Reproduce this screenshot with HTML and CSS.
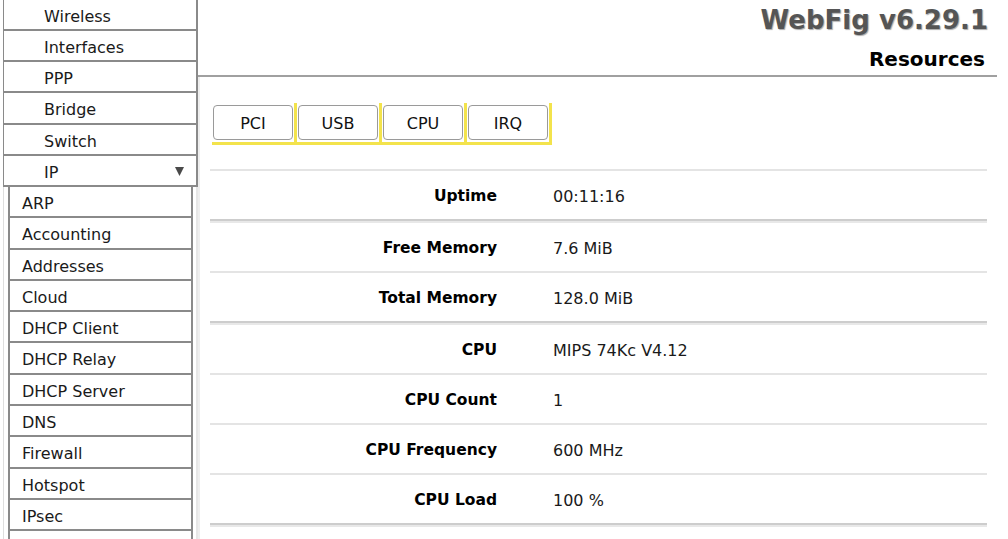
FILE: index.html
```html
<!DOCTYPE html>
<html lang="en">
<head>
<meta charset="utf-8">
<title>WebFig - Resources</title>
<link rel="stylesheet" href="styles.css">
</head>
<body>
<div class="page">
  <nav class="sidebar">
    <ul class="menu">
      <li class="menu-item first">Wireless</li>
      <li class="menu-item">Interfaces</li>
      <li class="menu-item">PPP</li>
      <li class="menu-item">Bridge</li>
      <li class="menu-item">Switch</li>
      <li class="menu-item open">IP
        <svg class="arrow" width="9" height="10" viewBox="0 0 9 10"><polygon points="0,1 9,1 4.5,10" fill="#4a4a4a"/></svg>
      </li>
    </ul>
    <div class="submenu-wrap">
      <ul class="submenu">
        <li class="sub-item">ARP</li>
        <li class="sub-item">Accounting</li>
        <li class="sub-item">Addresses</li>
        <li class="sub-item">Cloud</li>
        <li class="sub-item">DHCP Client</li>
        <li class="sub-item">DHCP Relay</li>
        <li class="sub-item">DHCP Server</li>
        <li class="sub-item">DNS</li>
        <li class="sub-item">Firewall</li>
        <li class="sub-item">Hotspot</li>
        <li class="sub-item">IPsec</li>
        <li class="sub-item empty"></li>
      </ul>
    </div>
  </nav>
  <main class="main">
    <header class="header">
      <div class="brand">WebFig v6.29.1</div>
      <div class="page-title">Resources</div>
    </header>
    <section class="content">
      <div class="tabs">
        <span class="tab"><button class="tab-btn">PCI</button></span>
        <span class="tab"><button class="tab-btn">USB</button></span>
        <span class="tab"><button class="tab-btn">CPU</button></span>
        <span class="tab"><button class="tab-btn">IRQ</button></span>
      </div>
      <div class="table">
        <div class="sep single"></div>
        <div class="row"><span class="label">Uptime</span><span class="value">00:11:16</span></div>
        <div class="sep double"></div>
        <div class="row"><span class="label">Free Memory</span><span class="value">7.6 MiB</span></div>
        <div class="sep single"></div>
        <div class="row"><span class="label">Total Memory</span><span class="value">128.0 MiB</span></div>
        <div class="sep double"></div>
        <div class="row"><span class="label">CPU</span><span class="value">MIPS 74Kc V4.12</span></div>
        <div class="sep single"></div>
        <div class="row"><span class="label">CPU Count</span><span class="value">1</span></div>
        <div class="sep single"></div>
        <div class="row"><span class="label">CPU Frequency</span><span class="value">600 MHz</span></div>
        <div class="sep single"></div>
        <div class="row"><span class="label">CPU Load</span><span class="value">100 %</span></div>
        <div class="sep double"></div>
      </div>
    </section>
  </main>
</div>
</body>
</html>
```

FILE: styles.css
```css
html, body {
  margin: 0;
  padding: 0;
  height: 539px;
  overflow: hidden;
  background: #fff;
}

body {
  font-family: "DejaVu Sans", Verdana, sans-serif;
  font-size: 16px;
  color: #1a1a1a;
}

.page {
  display: flex;
  align-items: stretch;
  height: 539px;
}

/* ---------- sidebar ---------- */
.sidebar {
  width: 198px;
  flex: none;
  display: flex;
  flex-direction: column;
}

.menu, .submenu {
  list-style: none;
  margin: 0;
  padding: 0;
}

.menu {
  margin-left: 3px;
}

.menu-item {
  position: relative;
  height: 29.2px;
  line-height: 33px;
  padding-left: 40px;
  border-left: 1px solid #8a8a8a;
  border-right: 2px solid #8a8a8a;
  border-bottom: 2px solid #8a8a8a;
  color: #1a1a1a;
}

.menu-item.first {
  height: 29px;
  line-height: 34px;
}

.arrow {
  position: absolute;
  right: 12px;
  top: 10px;
}

.submenu-wrap {
  flex: 1;
  margin-left: 3px;
  border-left: 1px solid #dedede;
  border-right: 2px solid #e6e6e6;
  padding: 0 3px 0 4px;
}

.sub-item {
  height: 29.3px;
  line-height: 34px;
  padding-left: 12px;
  border-left: 2px solid #8a8a8a;
  border-right: 2px solid #8a8a8a;
  border-bottom: 2px solid #8a8a8a;
  color: #1a1a1a;
}

/* ---------- main ---------- */
.main {
  flex: 1;
  display: flex;
  flex-direction: column;
  margin-right: 11px;
}

.header {
  height: 75px;
  border-bottom: 2px solid #a0a0a0;
  display: flex;
  flex-direction: column;
  align-items: flex-end;
}

.brand {
  margin-top: 4px;
  margin-right: 9px;
  font-weight: bold;
  font-size: 26px;
  line-height: 32px;
  color: #555;
  text-shadow: 1px 1px 1px #aaa;
}

.page-title {
  margin-top: 11px;
  margin-right: 12px;
  font-weight: bold;
  font-size: 20px;
  line-height: 24px;
  color: #000;
}

.content {
  flex: 1;
  border-left: 2px solid #eeeeee;
  padding: 26px 10px 0 10px;
}

.tabs {
  display: flex;
  margin-left: 2px;
  width: max-content;
  border-bottom: 3px solid #f3e34c;
}

.tab {
  display: block;
  padding: 2px 1px 2px 1px;
  border-right: 3px solid #f3e34c;
}

.tab-btn {
  display: block;
  width: 80px;
  height: 35px;
  margin: 0;
  padding: 2px 0 0 0;
  background: #fff;
  border: 1px solid #9a9a9a;
  border-radius: 4px;
  font-family: "DejaVu Sans", Verdana, sans-serif;
  font-size: 16px;
  color: #111;
}

.table {
  margin-top: 24px;
}

.sep.single {
  height: 0;
  border-top: 2px solid #e4e4e4;
}

.sep.double {
  height: 0;
  border-top: 2px solid #cdcdcd;
  border-bottom: 2px solid #e8e8e8;
}

.row {
  display: grid;
  grid-template-columns: 287px 1fr;
  column-gap: 56px;
  height: 46px;
  padding-top: 2px;
  align-items: center;
}

.label {
  text-align: right;
  font-weight: bold;
  font-size: 15.5px;
  color: #000;
}

.value {
  color: #1a1a1a;
}
```
